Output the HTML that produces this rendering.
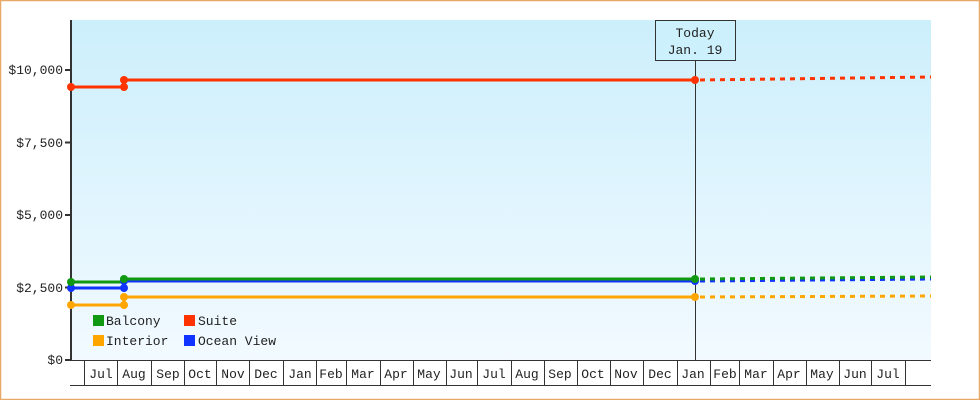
<!DOCTYPE html>
<html><head><meta charset="utf-8"><style>
html,body{margin:0;padding:0;background:#fff}
svg{display:block}
text{font-family:"Liberation Mono","DejaVu Sans Mono",monospace;font-size:13px;fill:#222}
</style></head><body>
<svg width="980" height="400" xmlns="http://www.w3.org/2000/svg">
<defs><linearGradient id="g" x1="0" y1="0" x2="0" y2="1">
<stop offset="0" stop-color="#cceffc"/><stop offset="1" stop-color="#f2faff"/></linearGradient></defs>
<rect x="0.5" y="0.5" width="979" height="399" fill="#fff" stroke="#e8a868" stroke-width="1.5"/>
<rect x="71" y="20" width="860" height="340" fill="url(#g)"/>
<line x1="71" y1="20" x2="71" y2="361" stroke="#333" stroke-width="2"/>
<line x1="70" y1="360.5" x2="931" y2="360.5" stroke="#333" stroke-width="1"/>
<line x1="70" y1="385.5" x2="931" y2="385.5" stroke="#333" stroke-width="1"/>
<g stroke="#333" stroke-width="2">
<line x1="65" y1="70" x2="71" y2="70"/><line x1="65" y1="142.5" x2="71" y2="142.5"/>
<line x1="65" y1="215" x2="71" y2="215"/><line x1="65" y1="287.5" x2="71" y2="287.5"/>
<line x1="65" y1="360" x2="71" y2="360"/></g>
<g text-anchor="end">
<text x="63" y="74">$10,000</text><text x="63" y="147">$7,500</text>
<text x="63" y="219">$5,000</text><text x="63" y="292">$2,500</text><text x="63" y="364">$0</text></g>
<g stroke="#333" stroke-width="1">
<line x1="84.5" y1="360" x2="84.5" y2="385"/><line x1="117.5" y1="360" x2="117.5" y2="385"/>
<line x1="151.5" y1="360" x2="151.5" y2="385"/><line x1="184.5" y1="360" x2="184.5" y2="385"/>
<line x1="216.5" y1="360" x2="216.5" y2="385"/><line x1="249.5" y1="360" x2="249.5" y2="385"/>
<line x1="283.5" y1="360" x2="283.5" y2="385"/><line x1="316.5" y1="360" x2="316.5" y2="385"/>
<line x1="346.5" y1="360" x2="346.5" y2="385"/><line x1="380.5" y1="360" x2="380.5" y2="385"/>
<line x1="413.5" y1="360" x2="413.5" y2="385"/><line x1="446.5" y1="360" x2="446.5" y2="385"/>
<line x1="477.5" y1="360" x2="477.5" y2="385"/><line x1="511.5" y1="360" x2="511.5" y2="385"/>
<line x1="544.5" y1="360" x2="544.5" y2="385"/><line x1="577.5" y1="360" x2="577.5" y2="385"/>
<line x1="610.5" y1="360" x2="610.5" y2="385"/><line x1="643.5" y1="360" x2="643.5" y2="385"/>
<line x1="677.5" y1="360" x2="677.5" y2="385"/><line x1="710.5" y1="360" x2="710.5" y2="385"/>
<line x1="739.5" y1="360" x2="739.5" y2="385"/><line x1="773.5" y1="360" x2="773.5" y2="385"/>
<line x1="806.5" y1="360" x2="806.5" y2="385"/><line x1="839.5" y1="360" x2="839.5" y2="385"/>
<line x1="871.5" y1="360" x2="871.5" y2="385"/><line x1="905.5" y1="360" x2="905.5" y2="385"/>
</g>
<g text-anchor="middle">
<text x="101" y="378">Jul</text><text x="134" y="378">Aug</text><text x="168" y="378">Sep</text>
<text x="200" y="378">Oct</text><text x="233" y="378">Nov</text><text x="266" y="378">Dec</text>
<text x="300" y="378">Jan</text><text x="331" y="378">Feb</text><text x="363" y="378">Mar</text>
<text x="396" y="378">Apr</text><text x="429" y="378">May</text><text x="461" y="378">Jun</text>
<text x="494" y="378">Jul</text><text x="527" y="378">Aug</text><text x="560" y="378">Sep</text>
<text x="593" y="378">Oct</text><text x="626" y="378">Nov</text><text x="660" y="378">Dec</text>
<text x="693" y="378">Jan</text><text x="725" y="378">Feb</text><text x="756" y="378">Mar</text>
<text x="789" y="378">Apr</text><text x="822" y="378">May</text><text x="855" y="378">Jun</text>
<text x="888" y="378">Jul</text></g>
<line x1="695.5" y1="60" x2="695.5" y2="360" stroke="#333" stroke-width="1"/>
<rect x="655.5" y="20.5" width="80" height="40" fill="#ccf0fc" stroke="#333" stroke-width="1"/>
<text x="695" y="37" text-anchor="middle">Today</text>
<text x="695" y="54" text-anchor="middle">Jan. 19</text>
<g stroke-width="3" fill="none">
<polyline stroke="#ff3300" points="71,87 124,87 124,80 695,80"/>
<polyline stroke="#ff3300" stroke-dasharray="5,5" points="700,80 931,77"/>
<polyline stroke="#1133ff" points="71,288 124,288 124,281 695,281"/>
<polyline stroke="#1133ff" stroke-dasharray="5,5" points="700,281 931,279"/>
<polyline stroke="#119911" points="71,282 124,282 124,279 695,279"/>
<polyline stroke="#119911" stroke-dasharray="5,5" points="700,279 931,277"/>
<polyline stroke="#ffa500" points="71,305 124,305 124,297 695,297"/>
<polyline stroke="#ffa500" stroke-dasharray="5,5" points="700,297 931,296"/>
</g>
<g>
<circle cx="71" cy="87" r="4" fill="#ff3300"/><circle cx="124" cy="87" r="4" fill="#ff3300"/><circle cx="124" cy="80" r="4" fill="#ff3300"/><circle cx="695" cy="80" r="4" fill="#ff3300"/>
<circle cx="71" cy="288" r="4" fill="#1133ff"/><circle cx="124" cy="288" r="4" fill="#1133ff"/><circle cx="124" cy="281" r="4" fill="#1133ff"/><circle cx="695" cy="281" r="4" fill="#1133ff"/>
<circle cx="71" cy="282" r="4" fill="#119911"/><circle cx="124" cy="279" r="4" fill="#119911"/><circle cx="695" cy="279" r="4" fill="#119911"/>
<circle cx="71" cy="305" r="4" fill="#ffa500"/><circle cx="124" cy="305" r="4" fill="#ffa500"/><circle cx="124" cy="297" r="4" fill="#ffa500"/><circle cx="695" cy="297" r="4" fill="#ffa500"/>
</g>
<rect x="93" y="315" width="11" height="11" fill="#119911"/><text x="106" y="325">Balcony</text>
<rect x="184" y="315" width="11" height="11" fill="#ff3300"/><text x="198" y="325">Suite</text>
<rect x="93" y="335" width="11" height="11" fill="#ffa500"/><text x="106" y="345">Interior</text>
<rect x="184" y="335" width="11" height="11" fill="#1133ff"/><text x="198" y="345">Ocean View</text>
</svg>
</body></html>
